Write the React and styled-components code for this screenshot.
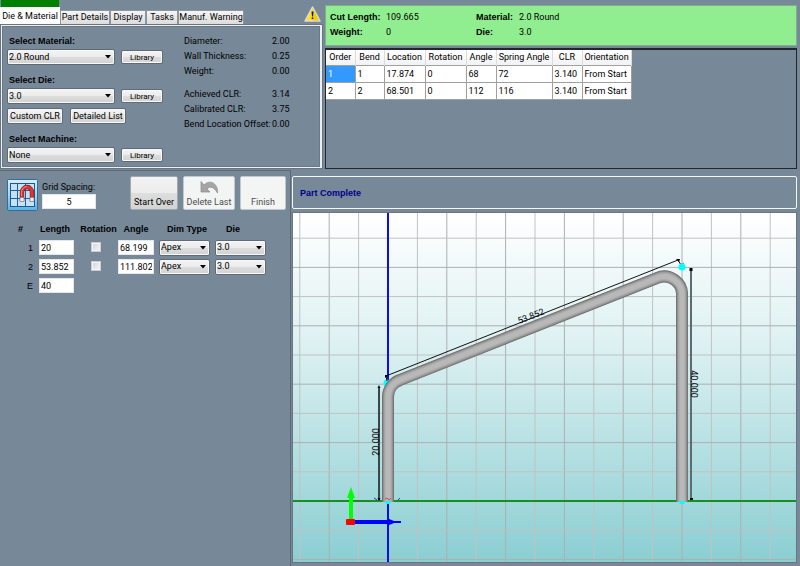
import React, { useState } from 'react';
import styled, { createGlobalStyle, css } from 'styled-components';

const GlobalStyle = createGlobalStyle`
    * {
        box-sizing: border-box;
    }
    body {
        margin: 0;
        background: #778899;
        color: #000;
        font-family: Roboto, "Liberation Sans", sans-serif;
        font-size: 9px;
        line-height: 14px;
    }
    button, input, select {
        margin: 0;
        font: inherit;
        color: inherit;
    }
`;

const boldText = css`
    font-family: "Liberation Sans", Arial, sans-serif;
    font-size: 9px;
    font-weight: bold;
`;

const raised = css`
    border: 1px solid #5f6a75;
    border-radius: 2px;
    background: linear-gradient(#f4f4f4, #ebebeb 50%, #dddddd 50%, #d2d2d2);
    box-shadow: inset 0 0 0 1px #f8f8f8;
`;

const Upper = styled.div`
    display: grid;
    grid-template-columns: 323px minmax(0, 1fr);
    column-gap: 2px;
`;

const Lower = styled.div`
    display: grid;
    grid-template-columns: 291px minmax(0, 1fr);
    column-gap: 1px;
`;

const SetupColumn = styled.div`
    display: flex;
    flex-direction: column;
    height: 169px;
`;

const SetupHeader = styled.div`
    display: flex;
    justify-content: space-between;
    height: 24px;
`;

const StatusStrip = styled.div`
    width: 58px;
    height: 8px;
    margin-left: 1px;
    background: #008000;
`;

const WarningIcon = styled.svg`
    width: 17px;
    height: 16px;
    margin: 6px 2px 0 0;
`;

const TabList = styled.div`
    display: flex;
    align-items: flex-end;
    height: 16px;
`;

const Tab = styled.button`
    width: ${props => props.$width}px;
    height: ${props => (props.$active ? 17 : 14)}px;
    padding: 0;
    border: 1px solid #8c949c;
    border-bottom: 0;
    background: linear-gradient(#f5f5f5, #dcdcdc);
    line-height: 13px;
    white-space: nowrap;
    ${props => props.$active && css`
        border-color: #fff;
        background: #fff;
    `}
`;

const TabPage = styled.div`
    flex: 1;
    display: flex;
    justify-content: space-between;
    border: 2px solid #eceef0;
    border-right-width: 3px;
    box-shadow: inset 0 0 0 1px #6a7988;
    outline: 1px solid #69747e;
    outline-offset: -1px;
    padding: 8px 30px 0 5px;
`;

const MaterialForm = styled.div`
    display: flex;
    flex-direction: column;
    gap: 8px;
`;

const FieldGroup = styled.div`
    display: grid;
    grid-template-columns: 108px 42px;
    column-gap: 6px;
    row-gap: 1px;
    align-items: center;
`;

const FieldLabel = styled.label`
    ${boldText}
    grid-column: span 2;
    padding-left: 2px;
    line-height: 14px;
`;

const SelectBox = styled.span`
    ${raised}
    display: grid;
    align-items: center;
    width: 100%;
    height: 16px;
    select, svg {
        grid-area: 1 / 1;
    }
    select {
        appearance: none;
        width: 100%;
        height: 14px;
        padding: 0 0 0 1px;
        border: 0;
        background: none;
        line-height: 13px;
    }
    svg {
        justify-self: end;
        width: 6px;
        height: 4px;
        margin-right: 3px;
        pointer-events: none;
    }
`;

const SmallButton = styled.button`
    ${raised}
    height: 14px;
    padding: 0;
    font-size: 8px;
    line-height: 11px;
`;

const ButtonRow = styled.div`
    display: flex;
    gap: 7px;
    margin-top: -4px;
`;

const WideButton = styled.button`
    ${raised}
    width: 56px;
    height: 16px;
    padding: 0;
    line-height: 13px;
    white-space: nowrap;
`;

const Readouts = styled.dl`
    display: grid;
    grid-template-columns: 88px 18px;
    align-content: start;
    margin: 0;
    line-height: 15px;
    white-space: nowrap;
    dt, dd {
        margin: 0;
    }
    .spaced {
        margin-top: 8px;
    }
`;

const ResultColumn = styled.div`
    display: flex;
    flex-direction: column;
    gap: 2px;
    height: 169px;
    padding: 5px 3px 0 0;
`;

const Summary = styled.dl`
    display: grid;
    grid-template-columns: 56px 90px 43px 1fr;
    align-content: start;
    height: 41px;
    margin: 0;
    padding: 4px 5px 0 4px;
    border: 1px solid #7fae8c;
    background: #90ee90;
    line-height: 15px;
    dt {
        ${boldText}
    }
    dd {
        margin: 0;
    }
`;

const BendPanel = styled.div`
    flex: 1;
    border: 1px solid #20262c;
    border-top-width: 2px;
`;

const BendTable = styled.table`
    table-layout: fixed;
    width: 305px;
    border-collapse: collapse;
    background: #fff;
    th {
        height: 15px;
        padding: 0;
        border-right: 1px solid #dcdcdc;
        background: linear-gradient(#fff, #f1f2f4);
        font-weight: normal;
        line-height: 14px;
        white-space: nowrap;
    }
    td {
        height: 17px;
        padding: 0 2px;
        border: 1px solid #a0a0a0;
        border-left: 0;
        line-height: 14px;
        white-space: nowrap;
    }
    .selected {
        background: #3399ff;
        color: #fff;
    }
`;

const EntryPanel = styled.div`
    border-top: 1px solid #5d6772;
    border-right: 1px solid #5d6772;
    margin-top: 1px;
    padding: 5px 3px 0 7px;
`;

const Toolbar = styled.div`
    display: flex;
    align-items: flex-start;
`;

const SnapButton = styled.button`
    width: 31px;
    height: 32px;
    margin-top: 3px;
    padding: 0;
    border: 1px solid #2f6f9f;
    border-radius: 2px;
    background: #9fd4f2;
    svg {
        display: block;
        width: 29px;
        height: 30px;
    }
`;

const GridSpacing = styled.label`
    width: 54px;
    margin: 4px 34px 0 4px;
    white-space: nowrap;
`;

const TextBox = styled.input`
    display: block;
    width: 100%;
    height: 15px;
    padding: 0 1px;
    border: 1px solid #e3e6ea;
    background: #fff;
    line-height: 13px;
    text-align: ${props => props.$align || 'left'};
`;

const ActionButtons = styled.div`
    display: flex;
    gap: 5px;
`;

const ActionButton = styled.button`
    display: flex;
    flex-direction: column;
    justify-content: flex-end;
    align-items: center;
    width: ${props => props.$width}px;
    height: 34px;
    padding: 0 0 1px;
    border: 1px solid #a3a8ad;
    border-radius: 2px;
    background: linear-gradient(#f2f2f2, #ececec 50%, #dedede 50%, #d3d3d3);
    line-height: 12px;
    white-space: nowrap;
    svg {
        width: 19px;
        height: 15px;
        margin-bottom: 1px;
    }
    &:disabled {
        background: #f3f4f4;
        border-color: #c2c8cd;
        color: #4c4c4c;
    }
`;

const EntryTable = styled.table`
    table-layout: fixed;
    width: 259px;
    margin-top: 10px;
    border-collapse: collapse;
    th {
        ${boldText}
        height: 17px;
        padding: 0 5px 1px 0;
        line-height: 14px;
        white-space: nowrap;
    }
    th:nth-child(2) {
        padding-right: 8px;
    }
    th:nth-child(3), th:nth-child(5) {
        padding-right: 0;
    }
    th:last-child {
        padding-right: 20px;
    }
    td {
        height: 19px;
        padding: 0 5px 0 0;
    }
    .index {
        padding-right: 6px;
        font-family: "Liberation Sans", Arial, sans-serif;
        text-align: right;
    }
`;

const CheckBox = styled.input`
    appearance: none;
    display: block;
    width: 10px;
    height: 10px;
    margin: 0 0 2px 12px;
    border: 1px solid #c9cdd1;
    background: linear-gradient(135deg, #cfd3d7, #f7f7f7);
    box-shadow: inset 0 0 0 1px #f4f4f4;
    &:checked {
        background: #2d5f9a;
    }
`;

const DrawingColumn = styled.div`
    padding: 7px 3px 4px 0;
`;

const PartStatus = styled.div`
    ${boldText}
    display: flex;
    align-items: center;
    height: 33px;
    margin-bottom: 3px;
    padding-left: 7px;
    border: 1px solid #f4f6f8;
    border-radius: 2px;
    color: #00008b;
`;

const Viewport = styled.svg`
    display: block;
    width: 100%;
    border: 1px solid #6b757f;
    text {
        font-size: 9px;
    }
`;

const tabs = [
    { name: 'Die & Material', width: 60 },
    { name: 'Part Details', width: 50 },
    { name: 'Display', width: 36 },
    { name: 'Tasks', width: 32 },
    { name: 'Manuf. Warning', width: 66 },
];

const readouts = [
    ['Diameter:', '2.00'],
    ['Wall Thickness:', '0.25'],
    ['Weight:', '0.00'],
    ['Achieved CLR:', '3.14'],
    ['Calibrated CLR:', '3.75'],
    ['Bend Location Offset:', '0.00'],
];

const bendColumns = [
    ['Order', 29], ['Bend', 29], ['Location', 41], ['Rotation', 41],
    ['Angle', 30], ['Spring Angle', 56], ['CLR', 30], ['Orientation', 49],
];

const bends = [
    ['1', '1', '17.874', '0', '68', '72', '3.140', 'From Start'],
    ['2', '2', '68.501', '0', '112', '116', '3.140', 'From Start'],
];

const segments = [
    { index: '1', length: '20', angle: '68.199' },
    { index: '2', length: '53.852', angle: '111.802' },
    { index: 'E', length: '40' },
];

// grey shades from the edge of the tube to its highlight
const tubeShades = [
    [12, '#666666'], [11, '#828282'], [9, '#9d9d9d'], [7, '#ababab'], [5, '#b8b8b8'],
];
const tubePath = 'M95 289V184A18 18 0 0 1 107 167L364 65A18 18 0 0 1 389 83V289';

const DropDown = ({ options, ...rest }) => (
    <SelectBox>
        <select {...rest}>
            {options.map(option => <option key={option}>{option}</option>)}
        </select>
        <svg viewBox="0 0 6 4"><path d="M0 0H6L3 3.500Z" /></svg>
    </SelectBox>
);

const LibraryField = ({ id, label, options }) => (
    <FieldGroup>
        <FieldLabel htmlFor={id}>{label}</FieldLabel>
        <DropDown id={id} options={options} />
        <SmallButton>Library</SmallButton>
    </FieldGroup>
);

const SnapIcon = () => (
    <svg viewBox="0 0 29 30">
        <defs>
            <linearGradient id="snapBack" x1="0" y1="0" x2="0" y2="1">
                <stop offset="0" stopColor="#d5edfa" />
                <stop offset="0.5" stopColor="#a5d7f2" />
                <stop offset="1" stopColor="#5fb2e2" />
            </linearGradient>
        </defs>
        <rect width="29" height="30" fill="url(#snapBack)" />
        <rect x="2.5" y="3.5" width="24" height="23" fill="#c5e3f5" stroke="#1d5796" />
        <path d="M9.5 3V27M17.500 3V27M2 10.5H27M2 18.5H27" stroke="#1d5fa5" fill="none" />
        <path d="M14 21V12.500A5 5.500 0 0 1 24 12.500V21" fill="none" stroke="#81191b" strokeWidth="4.400" />
        <path d="M14 20V12.500A5 5.500 0 0 1 24 12.500V20" fill="none" stroke="#dc3630" strokeWidth="3.200" />
        <path d="M13.500 16V12.500A5.500 6 0 0 1 19 6.500" fill="none" stroke="#f58a80" strokeWidth="1" />
        <path d="M12 17.500H16V21.500H12ZM22 17.500H26V21.500H22Z" fill="#f0f0f0" stroke="#777" strokeWidth="0.700" />
    </svg>
);

const UndoIcon = () => (
    <svg viewBox="0 0 19 15">
        <path d="M1 1.500V12H10L7 9C10 5.500 14 7 17.500 13C18.500 5 11 -2 4 5Z" fill="#a5a5a5" stroke="#8a8a8a" strokeWidth="0.700" />
    </svg>
);

const PartDrawing = () => {
    const verticals = [-3, -2, -1, 1, 2, 3, 4, 5, 6, 7, 8, 9, 10, 11, 12, 13];
    const horizontals = [-2, -1, 1, 2, 3, 4, 5, 6, 7, 8, 9];
    return (
        <Viewport viewBox="0 0 503 349" role="img" aria-label="Part drawing">
            <defs>
                <linearGradient id="sky" x1="0" y1="0" x2="0" y2="1">
                    <stop offset="0" stopColor="#ffffff" />
                    <stop offset="0.37" stopColor="#def1f2" />
                    <stop offset="1" stopColor="#8aced2" />
                </linearGradient>
            </defs>
            <rect width="503" height="349" fill="url(#sky)" />
            {verticals.map(n => (
                <line key={n} x1={95 + n * 29.4} x2={95 + n * 29.4} y1="0" y2="349" stroke={n % 2 ? '#c0c2c3' : '#acb0b1'} />
            ))}
            {horizontals.map(n => (
                <line key={n} x1="0" x2="503" y1={288 - n * 29.2} y2={288 - n * 29.2} stroke={n % 2 ? '#c0c2c3' : '#acb0b1'} />
            ))}
            <path d="M0 288H503" stroke="#16911f" strokeWidth="2" />
            <path d="M95 0V349" stroke="#0c0cf0" strokeWidth="2" />

            <circle cx="94" cy="170" r="3.500" fill="#00ffff" />
            {tubeShades.map(([width, color]) => (
                <path key={width} d={tubePath} fill="none" stroke={color} strokeWidth={width} />
            ))}

            <path d="M86 174V287" stroke="#38474a" strokeWidth="2" />
            <path d="M84.500 175L86 172L87.500 175ZM84.500 285L86 288L87.500 285Z" />
            <path d="M398 57V286" stroke="#5b6d70" strokeWidth="2" />
            <path d="M396.500 55H399.500V58H396.500ZM397 285H400V287H397Z" />
            <path d="M93 163L385 47L388 52M93 163L94 168" fill="none" stroke="#111" />
            <path d="M92 162H96L92 165ZM383 46L387 46L386 49Z" />

            <text transform="translate(86 229) rotate(-90)" textAnchor="middle">20.000</text>
            <text transform="translate(239 106) rotate(-21.600)" textAnchor="middle">53.852</text>
            <text transform="translate(398 171) rotate(90)" textAnchor="middle">40.000</text>

            <path d="M387 52L391 50" stroke="#4b9c42" fill="none" />
            <circle cx="389" cy="54" r="3.500" fill="#00ffff" />
            <path d="M92 288H98L97 291H93ZM386 288H392L391 291H387Z" fill="#00ffff" />
            <path d="M92 286L94 285L96 287L98 285" fill="none" stroke="#e34242" />
            <path d="M81 285L84 287M107 285L105 287" stroke="#2630c4" />

            <path d="M58 306V284" stroke="#00ff00" strokeWidth="4" />
            <path d="M54 285L58 274L62 285Z" fill="#00ff00" />
            <path d="M62 309H97" stroke="#0000ff" strokeWidth="4" />
            <path d="M95 305.500L101 308H108V310H101L95 312.500Z" fill="#0000ff" />
            <rect x="53" y="306" width="9" height="6" rx="1" fill="#ff0000" />
        </Viewport>
    );
};

const App = () => {
    const [activeTab, setActiveTab] = useState('Die & Material');

    return (
        <>
            <GlobalStyle />
            <Upper>
                <SetupColumn>
                    <SetupHeader>
                        <div>
                            <StatusStrip />
                            <TabList role="tablist">
                                {tabs.map(tab => (
                                    <Tab
                                        key={tab.name}
                                        role="tab"
                                        $width={tab.width}
                                        $active={tab.name === activeTab}
                                        aria-selected={tab.name === activeTab}
                                        onClick={() => setActiveTab(tab.name)}
                                    >
                                        {tab.name}
                                    </Tab>
                                ))}
                            </TabList>
                        </div>
                        <WarningIcon viewBox="0 0 17 16">
                            <path d="M8.500 1L16 15H1Z" fill="#ffe01a" stroke="#d9dde0" strokeWidth="1.500" strokeLinejoin="round" />
                            <path d="M8.500 2L15 14.500H8.500Z" fill="#f9cc00" />
                            <path d="M7.500 5.500H9.500L9 10.500H8ZM7.700 11.500H9.300V13H7.700Z" fill="#111" />
                        </WarningIcon>
                    </SetupHeader>
                    <TabPage role="tabpanel">
                        <MaterialForm>
                            <LibraryField id="material" label="Select Material:" options={['2.0 Round']} />
                            <LibraryField id="die" label="Select Die:" options={['3.0']} />
                            <ButtonRow>
                                <WideButton>Custom CLR</WideButton>
                                <WideButton>Detailed List</WideButton>
                            </ButtonRow>
                            <LibraryField id="machine" label="Select Machine:" options={['None']} />
                        </MaterialForm>
                        <Readouts>
                            {readouts.map(([name, value], i) => (
                                <React.Fragment key={name}>
                                    <dt className={i === 3 ? 'spaced' : undefined}>{name}</dt>
                                    <dd className={i === 3 ? 'spaced' : undefined}>{value}</dd>
                                </React.Fragment>
                            ))}
                        </Readouts>
                    </TabPage>
                </SetupColumn>

                <ResultColumn>
                    <Summary>
                        <dt>Cut Length:</dt>
                        <dd>109.665</dd>
                        <dt>Material:</dt>
                        <dd>2.0 Round</dd>
                        <dt>Weight:</dt>
                        <dd>0</dd>
                        <dt>Die:</dt>
                        <dd>3.0</dd>
                    </Summary>
                    <BendPanel>
                        <BendTable>
                            <colgroup>
                                {bendColumns.map(([name, width]) => <col key={name} width={width} />)}
                            </colgroup>
                            <thead>
                                <tr>
                                    {bendColumns.map(([name]) => <th key={name}>{name}</th>)}
                                </tr>
                            </thead>
                            <tbody>
                                {bends.map((bend, row) => (
                                    <tr key={bend[0]}>
                                        {bend.map((value, col) => (
                                            <td key={col} className={row === 0 && col === 0 ? 'selected' : undefined}>{value}</td>
                                        ))}
                                    </tr>
                                ))}
                            </tbody>
                        </BendTable>
                    </BendPanel>
                </ResultColumn>
            </Upper>

            <Lower>
                <EntryPanel>
                    <Toolbar>
                        <SnapButton aria-label="Snap to grid"><SnapIcon /></SnapButton>
                        <GridSpacing>
                            Grid Spacing:
                            <TextBox defaultValue="5" $align="center" />
                        </GridSpacing>
                        <ActionButtons>
                            <ActionButton $width={48}>Start Over</ActionButton>
                            <ActionButton $width={52} disabled><UndoIcon />Delete Last</ActionButton>
                            <ActionButton $width={46} disabled>Finish</ActionButton>
                        </ActionButtons>
                    </Toolbar>
                    <EntryTable>
                        <colgroup>
                            <col width="32" />
                            <col width="40" />
                            <col width="39" />
                            <col width="41" />
                            <col width="56" />
                            <col width="56" />
                        </colgroup>
                        <thead>
                            <tr>
                                <th>#</th>
                                <th>Length</th>
                                <th>Rotation</th>
                                <th>Angle</th>
                                <th>Dim Type</th>
                                <th>Die</th>
                            </tr>
                        </thead>
                        <tbody>
                            {segments.map(({ index, length, angle }) => (
                                <tr key={index}>
                                    <td className="index">{index}</td>
                                    <td><TextBox aria-label={`Length ${index}`} defaultValue={length} /></td>
                                    {angle && (
                                        <>
                                            <td><CheckBox type="checkbox" aria-label={`Rotation ${index}`} /></td>
                                            <td><TextBox aria-label={`Angle ${index}`} defaultValue={angle} /></td>
                                            <td><DropDown aria-label={`Dim Type ${index}`} options={['Apex']} /></td>
                                            <td><DropDown aria-label={`Die ${index}`} options={['3.0']} /></td>
                                        </>
                                    )}
                                </tr>
                            ))}
                        </tbody>
                    </EntryTable>
                </EntryPanel>

                <DrawingColumn>
                    <PartStatus>Part Complete</PartStatus>
                    <PartDrawing />
                </DrawingColumn>
            </Lower>
        </>
    );
};

export default App;
